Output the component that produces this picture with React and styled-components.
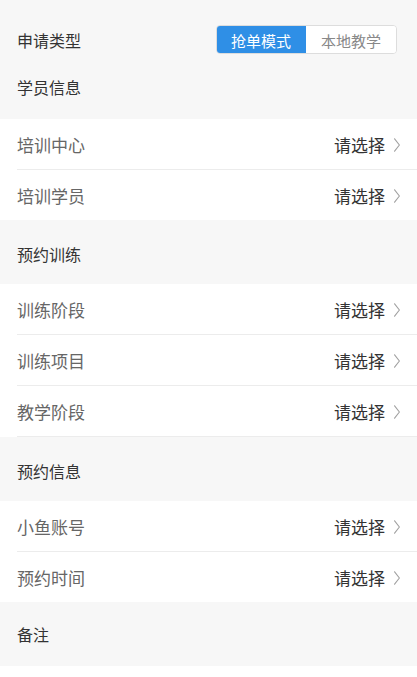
import React from "react";
import styled, { createGlobalStyle } from "styled-components";

const Global = createGlobalStyle`
  html, body { margin: 0; padding: 0; background: #ffffff; }
  body { font-family: "Noto Sans CJK SC", "Noto Sans", sans-serif; }
  * { box-sizing: border-box; }
`;

const Page = styled.div`
  width: 417px;
  min-height: 677px;
  background: #ffffff;
  display: flex;
  flex-direction: column;
`;

const TopPanel = styled.div`
  background: #f7f7f7;
  padding: 25px 20px 0 17px;
  height: 119px;
  display: flex;
  flex-direction: column;
`;

const TypeRow = styled.div`
  display: flex;
  align-items: center;
  justify-content: space-between;
  height: 29px;
`;

const TypeLabel = styled.span`
  font-size: 16px;
  line-height: 22px;
  color: #333333;
  padding-top: 1px;
`;

const Segmented = styled.div`
  display: flex;
  width: 181px;
  height: 29px;
  border-radius: 4px;
  overflow: hidden;
  border: 1px solid #dddddd;
  background: #ffffff;
`;

const Segment = styled.div`
  flex: 1;
  display: flex;
  align-items: center;
  justify-content: center;
  font-size: 15px;
  padding-top: 2px;
  color: ${(p) => (p.$active ? "#ffffff" : "#888888")};
  background: ${(p) => (p.$active ? "#2f8fe6" : "#ffffff")};
  margin: ${(p) => (p.$active ? "-1px 0 -1px -1px" : "0")};
`;

const SectionTitle = styled.div`
  background: #f7f7f7;
  height: ${(p) => p.$h || 64}px;
  padding: ${(p) => p.$pt ?? 24}px 17px 0;
  font-size: 16px;
  line-height: 22px;
  color: #333333;
`;

const InlineTitle = styled.div`
  margin-top: 22px;
  font-size: 16px;
  line-height: 22px;
  color: #333333;
`;

const Group = styled.div`
  background: #ffffff;
  display: flex;
  flex-direction: column;
`;

const Row = styled.div`
  height: 50px;
  display: flex;
  align-items: center;
  justify-content: space-between;
  padding: 0 17px 0 17px;
`;

const Divider = styled.div`
  height: 1px;
  margin-left: 17px;
  background: #ececec;
`;

const RowLabel = styled.span`
  font-size: 17px;
  color: #666666;
`;

const Picker = styled.span`
  display: flex;
  align-items: center;
  gap: 9px;
  font-size: 17px;
  color: #333333;
`;

const ChevronIcon = styled.svg`
  display: block;
  margin-top: 1px;
`;

const Chevron = () => (
  <ChevronIcon width="6" height="14" viewBox="0 0 6 14" fill="none">
    <path d="M0.6 0.8 L5.4 7 L0.6 13.2" stroke="#a0a0a0" strokeWidth="1.1" strokeLinejoin="round" strokeLinecap="round" />
  </ChevronIcon>
);

const Item = ({ label }) => (
  <Row>
    <RowLabel>{label}</RowLabel>
    <Picker>
      请选择
      <Chevron />
    </Picker>
  </Row>
);

const ItemList = ({ items, trailing }) => (
  <Group>
    {items.map((it, i) => (
      <React.Fragment key={it}>
        {i > 0 && <Divider />}
        <Item label={it} />
      </React.Fragment>
    ))}
    {trailing && <Divider />}
  </Group>
);

export default function App() {
  return (
    <Page>
      <Global />
      <TopPanel>
        <TypeRow>
          <TypeLabel>申请类型</TypeLabel>
          <Segmented>
            <Segment $active>抢单模式</Segment>
            <Segment>本地教学</Segment>
          </Segmented>
        </TypeRow>
        <InlineTitle>学员信息</InlineTitle>
      </TopPanel>
      <ItemList items={["培训中心", "培训学员"]} />
      <SectionTitle $pt={23}>预约训练</SectionTitle>
      <ItemList items={["训练阶段", "训练项目", "教学阶段"]} trailing />
      <SectionTitle $pt={23}>预约信息</SectionTitle>
      <ItemList items={["小鱼账号", "预约时间"]} />
      <SectionTitle $pt={21}>备注</SectionTitle>
    </Page>
  );
}
